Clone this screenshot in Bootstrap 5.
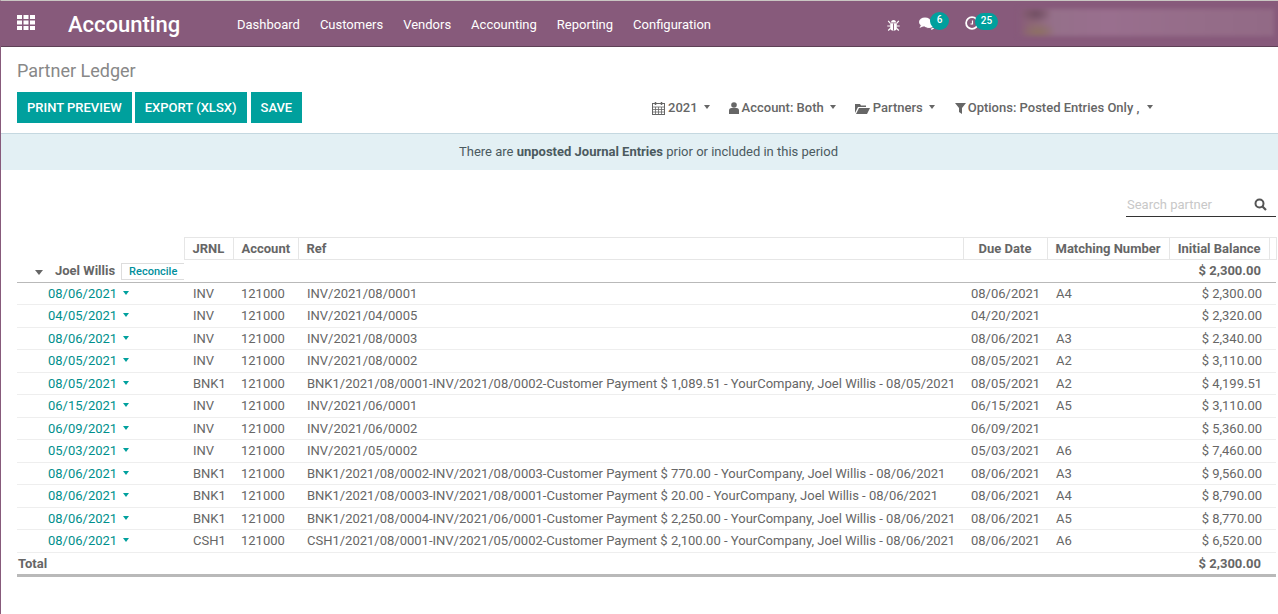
<!DOCTYPE html>
<html lang="en"><head><meta charset="utf-8"><title>Partner Ledger</title>
<link href="https://cdn.jsdelivr.net/npm/bootstrap@5.3.0/dist/css/bootstrap.min.css" rel="stylesheet">
<style>
html,body{height:100%}
body{font-family:Roboto,"Noto Sans",sans-serif;font-size:13px;color:#666;background:#fff;border-left:1px solid #875a7b;border-top:1px solid #c9c6c2;overflow:hidden;line-height:1.5}
.topbar{height:46px;background:#875a7b;border-bottom:1px solid #5e4156;color:#fff;padding-left:16px;padding-top:2px}
.appgrid{width:18px;height:15px;margin-right:32px;margin-top:-5px}
.appname{font-size:22px;font-weight:500;color:#fff;width:170px;padding-left:1px;line-height:1}
.menuitem{color:#fff;font-size:13px;margin-right:20px;text-decoration:none}
.pill{position:absolute;background:#00a09d;color:#fff;font-size:10px;font-weight:500;border-radius:10px;height:17px;line-height:15px;text-align:center}
.blurbox{position:absolute;left:1017px;top:8px;width:256px;height:27px;filter:blur(2px);background:radial-gradient(ellipse 16px 9px at 7% 18%,#6f4d62 0,rgba(111,77,98,0) 100%),radial-gradient(ellipse 18px 10px at 8% 85%,#8d7163 0,rgba(141,113,99,0) 100%),linear-gradient(90deg,#875a7b 0,#8d6577 5%,#95708a 14%,#996f8e 35%,#956d89 70%,#926a86 100%)}
.pagehead{padding:13px 16px 0 16px;height:86px}
.pagetitle{font-size:18px;font-weight:400;color:#888;margin:0 0 10px 0;line-height:22px}
.actbtn{background:#00a09d;color:#fff;border:0;border-radius:0;font-size:13px;font-weight:500;height:31px;padding:0 10px;margin-right:3px;line-height:31px}
.actbtn:nth-child(2){margin-right:4px}
.actbtn:hover{background:#00a09d;color:#fff}
.filterbar{position:absolute;top:100px;left:652px;color:#666;font-weight:500;font-size:13px;gap:19px;line-height:16px}
.fitem{display:flex;align-items:center;gap:3px}
.fitemlast{gap:2px;margin-left:1px}
.caretd{display:inline-block;border-top:4px solid #666;border-left:3.5px solid transparent;border-right:3.5px solid transparent;margin-left:3px;margin-top:-3px}
.fitemlast .caretd{margin-left:6px}
.noticebar{background:#e3f0f4;color:#4b5a5f;height:37px;line-height:36px;text-align:center;border-top:1px solid #c5d8e0;padding-left:18px}
.searchrow{height:67px;padding-right:2px}
.searchbx{width:150px;border-bottom:1px solid #333;height:25px;margin-top:22px;color:#c8c8c8;padding-left:1px;line-height:24px;padding-top:1px}
.searchglass{margin-right:9px}
.ledger{margin-left:16px;width:1259px;table-layout:fixed;border-collapse:collapse;color:#666}
.ledger th,.ledger td{padding:0 8px;white-space:nowrap;font-weight:400;height:22.5px;line-height:15px;vertical-align:middle;overflow:hidden}
.ledger thead th{font-weight:700;border:1px solid #e6e6e6;height:22px}
.ledger thead th.blankhead{border:0}
.ledger tbody td{border-bottom:1px solid #eee}
.ledger tbody td:nth-child(2),.ledger tbody td:nth-child(4),.ledger tbody td:nth-child(6){padding-left:9px}
.ledger tbody td.endcell{padding-right:7px}
.ledger tbody tr.partnerrow td{border-bottom:1px solid #b9b9b9;font-weight:700}
.ledger tbody tr.totalrow td{border-bottom:3px solid #b9b9b9;font-weight:700;height:23px}
.ledger tbody tr.partnerrow td.endcell,.ledger tbody tr.totalrow td.endcell{padding-right:8px}
.ledger tbody tr.totalrow td:first-child{padding-left:1px}
.endcell{text-align:right}
.w1{width:167px}.w2{width:49px}.w3{width:65px}.w4{width:665px}.w5{width:84px}.w6{width:122px}.w7{width:100px}.w8{width:7px}
.datelink{color:#008f8c;padding-left:31px!important}
.rowcaret{display:inline-block;border-top:4px solid #00a09d;border-left:3.5px solid transparent;border-right:3.5px solid transparent;margin-left:6px;vertical-align:3px}
.partnercaret{display:inline-block;border-top:5px solid #666;border-left:4.5px solid transparent;border-right:4.5px solid transparent;margin:0 12px 0 18px;vertical-align:0}
.recbtn{display:inline-block;border:1px solid #ddd;color:#008f9c;font-weight:500;font-size:11px;line-height:15px;height:17px;padding:0 7px;margin-left:6px;vertical-align:0}
.ledger tbody tr.partnerrow td.partnercell{padding:2px 0 0 0}
.ledger tbody tr td:last-child{padding:0}
</style></head>
<body>
<nav class="topbar d-flex align-items-center position-relative">
  <svg class="appgrid" viewBox="0 0 18 15" fill="#fff" aria-hidden="true"><rect x="0" y="0" width="5" height="4"/><rect x="6.5" y="0" width="5" height="4"/><rect x="13" y="0" width="5" height="4"/><rect x="0" y="5.5" width="5" height="4"/><rect x="6.5" y="5.5" width="5" height="4"/><rect x="13" y="5.5" width="5" height="4"/><rect x="0" y="11" width="5" height="4"/><rect x="6.5" y="11" width="5" height="4"/><rect x="13" y="11" width="5" height="4"/></svg>
  <div class="appname">Accounting</div>
  <a class="menuitem" href="#">Dashboard</a><a class="menuitem" href="#">Customers</a><a class="menuitem" href="#">Vendors</a><a class="menuitem" href="#">Accounting</a><a class="menuitem" href="#">Reporting</a><a class="menuitem" href="#">Configuration</a>
  <svg style="position:absolute;left:886px;top:17px" width="13" height="13" viewBox="0 0 13 13" fill="#fff" stroke="#fff" aria-hidden="true"><path d="M3.2 5.2h6.6V9.5a3.3 3.3 0 0 1-6.6 0z" stroke="none"/><path d="M4 4.4a2.5 2.5 0 0 1 5 0z" stroke="none"/><path d="M1.2 2.8l2.2 2.6M11.8 2.8L9.6 5.4M.3 8h3M12.7 8h-3M1.2 12.5l2.4-2.3M11.8 12.5l-2.4-2.3" fill="none" stroke-width="1.2"/><path d="M6.5 5.4V12.6" stroke="#875a7b" stroke-width=".9"/></svg>
  <svg style="position:absolute;left:918px;top:16px" width="16" height="14" viewBox="0 0 16 14" aria-hidden="true"><path d="M11 9.5l1.5 3.5 2.5-1.5-1-2.5z" fill="#fff"/><ellipse cx="10" cy="8" rx="5" ry="3.5" fill="#fff" stroke="#875a7b"/><ellipse cx="6" cy="5" rx="6" ry="4.5" fill="#fff"/><path d="M2 8l-1.500 3 4.500-2z" fill="#fff"/></svg>
  <span class="pill" style="left:929px;top:11px;width:19px;height:18px;border-radius:50%">6</span>
  <svg style="position:absolute;left:964px;top:15px" width="14" height="14" viewBox="0 0 14 14" fill="none" stroke="#fff" aria-hidden="true"><circle cx="7" cy="7" r="5.9" stroke-width="1.8"/><path d="M7.500 4.500V8H5.500" stroke-width="1.200"/></svg>
  <span class="pill" style="left:974px;top:12px;width:23px">25</span>
  <div class="blurbox"></div>
</nav>
<div class="pagehead">
  <h1 class="pagetitle">Partner Ledger</h1>
  <div class="d-flex"><button class="btn actbtn">PRINT PREVIEW</button><button class="btn actbtn">EXPORT (XLSX)</button><button class="btn actbtn">SAVE</button></div>
</div>
<div class="filterbar d-flex">
  <span class="fitem"><svg width="13" height="13" viewBox="0 0 13 13" fill="none" stroke="#666" aria-hidden="true"><rect x=".5" y="1.500" width="12" height="11"/><path d="M.5 5h12M.5 7.500h12M.5 10h12M3.500 5v7M6.500 5v7M9.500 5v7" stroke-width=".8"/><path d="M3.500 0v3M9.500 0v3" stroke-width="1.500"/></svg>2021<i class="caretd"></i></span>
  <span class="fitem"><svg width="10" height="12" viewBox="0 0 10 12" fill="#666" aria-hidden="true"><circle cx="5" cy="3" r="2.800"/><path d="M0 12V8.500Q0 6 2.500 6h5Q10 6 10 8.500V12z"/></svg>Account: Both<i class="caretd"></i></span>
  <span class="fitem"><svg width="15" height="11" viewBox="0 0 15 11" fill="#666" aria-hidden="true"><path d="M0 10V1h5l1 1.500h5V4H3zM1 11l3-6h11l-3 6z"/></svg>Partners<i class="caretd"></i></span>
  <span class="fitem fitemlast"><svg width="11" height="11" viewBox="0 0 11 11" fill="#666" aria-hidden="true"><path d="M0 0h11L7 5v6L4 9V5z"/></svg>Options: Posted Entries Only ,<i class="caretd"></i></span>
</div>
<div class="noticebar">There are <b>unposted Journal Entries</b> prior or included in this period</div>
<div class="searchrow d-flex justify-content-end">
  <div class="searchbx d-flex justify-content-between align-items-center"><span>Search partner</span><svg class="searchglass" width="13" height="13" viewBox="0 0 13 13" fill="none" stroke="#555" aria-hidden="true"><circle cx="5.500" cy="5.500" r="4" stroke-width="2"/><path d="M8.500 8.500L12 12" stroke-width="2.200"/></svg></div>
</div>
<table class="ledger">
<colgroup><col class="w1"><col class="w2"><col class="w3"><col class="w4"><col class="w5"><col class="w6"><col class="w7"><col class="w8"></colgroup>
<thead><tr><th class="blankhead"></th><th>JRNL</th><th>Account</th><th>Ref</th><th class="text-center">Due Date</th><th>Matching Number</th><th class="endcell">Initial Balance</th><th></th></tr></thead>
<tbody>
<tr class="partnerrow"><td class="partnercell"><i class="partnercaret"></i>Joel Willis<span class="recbtn">Reconcile</span></td><td></td><td></td><td></td><td></td><td></td><td class="endcell">$ 2,300.00</td><td></td></tr>
<tr><td class="datelink">08/06/2021<i class="rowcaret"></i></td><td>INV</td><td>121000</td><td>INV/2021/08/0001</td><td>08/06/2021</td><td>A4</td><td class="endcell">$ 2,300.00</td><td></td></tr>
<tr><td class="datelink">04/05/2021<i class="rowcaret"></i></td><td>INV</td><td>121000</td><td>INV/2021/04/0005</td><td>04/20/2021</td><td></td><td class="endcell">$ 2,320.00</td><td></td></tr>
<tr><td class="datelink">08/06/2021<i class="rowcaret"></i></td><td>INV</td><td>121000</td><td>INV/2021/08/0003</td><td>08/06/2021</td><td>A3</td><td class="endcell">$ 2,340.00</td><td></td></tr>
<tr><td class="datelink">08/05/2021<i class="rowcaret"></i></td><td>INV</td><td>121000</td><td>INV/2021/08/0002</td><td>08/05/2021</td><td>A2</td><td class="endcell">$ 3,110.00</td><td></td></tr>
<tr><td class="datelink">08/05/2021<i class="rowcaret"></i></td><td>BNK1</td><td>121000</td><td>BNK1/2021/08/0001-INV/2021/08/0002-Customer Payment $ 1,089.51 - YourCompany, Joel Willis - 08/05/2021</td><td>08/05/2021</td><td>A2</td><td class="endcell">$ 4,199.51</td><td></td></tr>
<tr><td class="datelink">06/15/2021<i class="rowcaret"></i></td><td>INV</td><td>121000</td><td>INV/2021/06/0001</td><td>06/15/2021</td><td>A5</td><td class="endcell">$ 3,110.00</td><td></td></tr>
<tr><td class="datelink">06/09/2021<i class="rowcaret"></i></td><td>INV</td><td>121000</td><td>INV/2021/06/0002</td><td>06/09/2021</td><td></td><td class="endcell">$ 5,360.00</td><td></td></tr>
<tr><td class="datelink">05/03/2021<i class="rowcaret"></i></td><td>INV</td><td>121000</td><td>INV/2021/05/0002</td><td>05/03/2021</td><td>A6</td><td class="endcell">$ 7,460.00</td><td></td></tr>
<tr><td class="datelink">08/06/2021<i class="rowcaret"></i></td><td>BNK1</td><td>121000</td><td>BNK1/2021/08/0002-INV/2021/08/0003-Customer Payment $ 770.00 - YourCompany, Joel Willis - 08/06/2021</td><td>08/06/2021</td><td>A3</td><td class="endcell">$ 9,560.00</td><td></td></tr>
<tr><td class="datelink">08/06/2021<i class="rowcaret"></i></td><td>BNK1</td><td>121000</td><td>BNK1/2021/08/0003-INV/2021/08/0001-Customer Payment $ 20.00 - YourCompany, Joel Willis - 08/06/2021</td><td>08/06/2021</td><td>A4</td><td class="endcell">$ 8,790.00</td><td></td></tr>
<tr><td class="datelink">08/06/2021<i class="rowcaret"></i></td><td>BNK1</td><td>121000</td><td>BNK1/2021/08/0004-INV/2021/06/0001-Customer Payment $ 2,250.00 - YourCompany, Joel Willis - 08/06/2021</td><td>08/06/2021</td><td>A5</td><td class="endcell">$ 8,770.00</td><td></td></tr>
<tr><td class="datelink">08/06/2021<i class="rowcaret"></i></td><td>CSH1</td><td>121000</td><td>CSH1/2021/08/0001-INV/2021/05/0002-Customer Payment $ 2,100.00 - YourCompany, Joel Willis - 08/06/2021</td><td>08/06/2021</td><td>A6</td><td class="endcell">$ 6,520.00</td><td></td></tr>
<tr class="totalrow"><td>Total</td><td></td><td></td><td></td><td></td><td></td><td class="endcell">$ 2,300.00</td><td></td></tr>
</tbody></table>
<script src="https://cdn.jsdelivr.net/npm/bootstrap@5.3.0/dist/js/bootstrap.bundle.min.js"></script>
</body></html>
